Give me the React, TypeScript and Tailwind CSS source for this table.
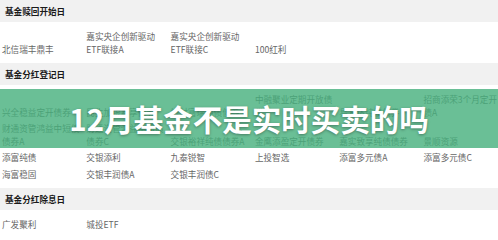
import React from "react"

type Section = {
  title: string
  rows: string[][]
}

const sections: Section[] = [
  {
    title: "基金赎回开始日",
    rows: [["北信瑞丰鼎丰", "嘉实央企创新驱动 ETF联接A", "嘉实央企创新驱动 ETF联接C", "100红利"]],
  },
  {
    title: "基金分红登记日",
    rows: [
      ["兴全稳益定开债券", "民生加银鑫享债券", "博时富瑞纯债债券", "中融聚业定期开放债券", "易方达纯债债券", "招商添荣3个月定开债A"],
      ["财通资管鸿益中短债债券A", "财通资管鸿益中短债债券C", "交银裕祥纯债债券A", "金鹰添盈定开债券", "嘉实致享纯债债券", "景顺资源"],
      ["添富纯债", "交银添利", "九泰锐智", "上投智选", "添富多元债A", "添富多元债C"],
      ["海富稳固", "交银丰润债A", "交银丰润债C"],
    ],
  },
  {
    title: "基金分红除息日",
    rows: [["广发聚利", "城投ETF"]],
  },
]

function Header({ title }: { title: string }) {
  return (
    <div className="h-[22px] bg-[#f1f1f1] flex items-center pl-[5px] text-[8.6px] font-bold text-[#1a1a1a]">
      {title}
    </div>
  )
}

export default function App() {
  return (
    <div className="relative w-[498px] h-[240px] overflow-hidden bg-white font-['Noto_Sans_CJK_SC',sans-serif]">
      {sections.map((s) => (
        <div key={s.title}>
          <Header title={s.title} />
          <div className="py-[6px]">
            {s.rows.map((row, i) => (
              <div key={i} className="grid grid-cols-[repeat(6,84.3px)] items-end">
                {row.map((cell) => (
                  <div key={cell} className="px-[2px] py-[2px] text-[8.6px] leading-[12.5px] text-[#666]">
                    {cell}
                  </div>
                ))}
              </div>
            ))}
          </div>
        </div>
      ))}

      {/* green title band over the list */}
      <div className="absolute left-0 right-0 top-[89px] h-[59px] bg-[#45af7c]/80 flex items-center justify-center">
        <span className="text-white font-bold text-[29.5px] leading-none [text-shadow:0_1px_3px_rgba(0,0,0,0.35)]">
          12月基金不是实时买卖的吗
        </span>
      </div>
    </div>
  )
}
